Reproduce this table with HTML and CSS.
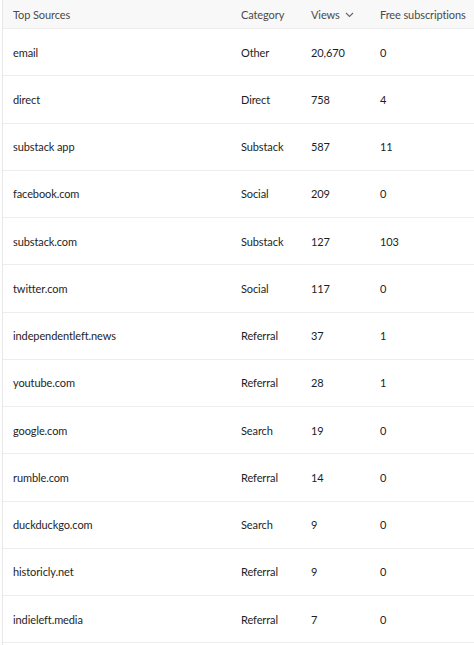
FILE: index.html
```html
<!DOCTYPE html>
<html>
<head>
<meta charset="utf-8">
<link rel="stylesheet" href="styles.css">
</head>
<body>
<div class="table">
  <div class="row head">
    <div class="c c1">Top Sources</div>
    <div class="c c2">Category</div>
    <div class="c c3">Views <svg class="chev" width="9" height="6" viewBox="0 0 9 6"><path d="M1 1 L4.5 4.5 L8 1" fill="none" stroke="#666" stroke-width="1.1"/></svg></div>
    <div class="c c4">Free subscriptions</div>
  </div>
  <div class="row"><div class="c c1">email</div><div class="c c2">Other</div><div class="c c3">20,670</div><div class="c c4">0</div></div>
  <div class="row"><div class="c c1">direct</div><div class="c c2">Direct</div><div class="c c3">758</div><div class="c c4">4</div></div>
  <div class="row"><div class="c c1">substack app</div><div class="c c2">Substack</div><div class="c c3">587</div><div class="c c4">11</div></div>
  <div class="row"><div class="c c1">facebook.com</div><div class="c c2">Social</div><div class="c c3">209</div><div class="c c4">0</div></div>
  <div class="row"><div class="c c1">substack.com</div><div class="c c2">Substack</div><div class="c c3">127</div><div class="c c4">103</div></div>
  <div class="row"><div class="c c1">twitter.com</div><div class="c c2">Social</div><div class="c c3">117</div><div class="c c4">0</div></div>
  <div class="row"><div class="c c1">independentleft.news</div><div class="c c2">Referral</div><div class="c c3">37</div><div class="c c4">1</div></div>
  <div class="row"><div class="c c1">youtube.com</div><div class="c c2">Referral</div><div class="c c3">28</div><div class="c c4">1</div></div>
  <div class="row"><div class="c c1">google.com</div><div class="c c2">Search</div><div class="c c3">19</div><div class="c c4">0</div></div>
  <div class="row"><div class="c c1">rumble.com</div><div class="c c2">Referral</div><div class="c c3">14</div><div class="c c4">0</div></div>
  <div class="row"><div class="c c1">duckduckgo.com</div><div class="c c2">Search</div><div class="c c3">9</div><div class="c c4">0</div></div>
  <div class="row"><div class="c c1">historicly.net</div><div class="c c2">Referral</div><div class="c c3">9</div><div class="c c4">0</div></div>
  <div class="row"><div class="c c1">indieleft.media</div><div class="c c2">Referral</div><div class="c c3">7</div><div class="c c4">0</div></div>
</div>
</body>
</html>
```
FILE: styles.css
```css
html, body {
  margin: 0;
  padding: 0;
  background: #fff;
}
body {
  font-family: Lato, "Noto Sans", sans-serif;
  font-size: 11px;
  letter-spacing: -0.1px;
  color: #1e1e1e;
  overflow: hidden;
  height: 645px;
}
.table {
  margin-left: 2px;
  border-left: 1px solid #e8e8e8;
  min-height: 645px;
}
.row {
  display: grid;
  grid-template-columns: 228px 70px 69px 1fr;
  height: 46.25px;
  align-items: center;
  border-bottom: 1px solid #ededed;
  padding-left: 10px;
}
.row.head {
  height: 28px;
  background: #f8f8f8;
  color: #4a4a4a;
}
.c {
  white-space: nowrap;
}
.c3 {
  display: flex;
  align-items: center;
  gap: 5px;
}
.chev {
  margin-top: 1px;
}
```
